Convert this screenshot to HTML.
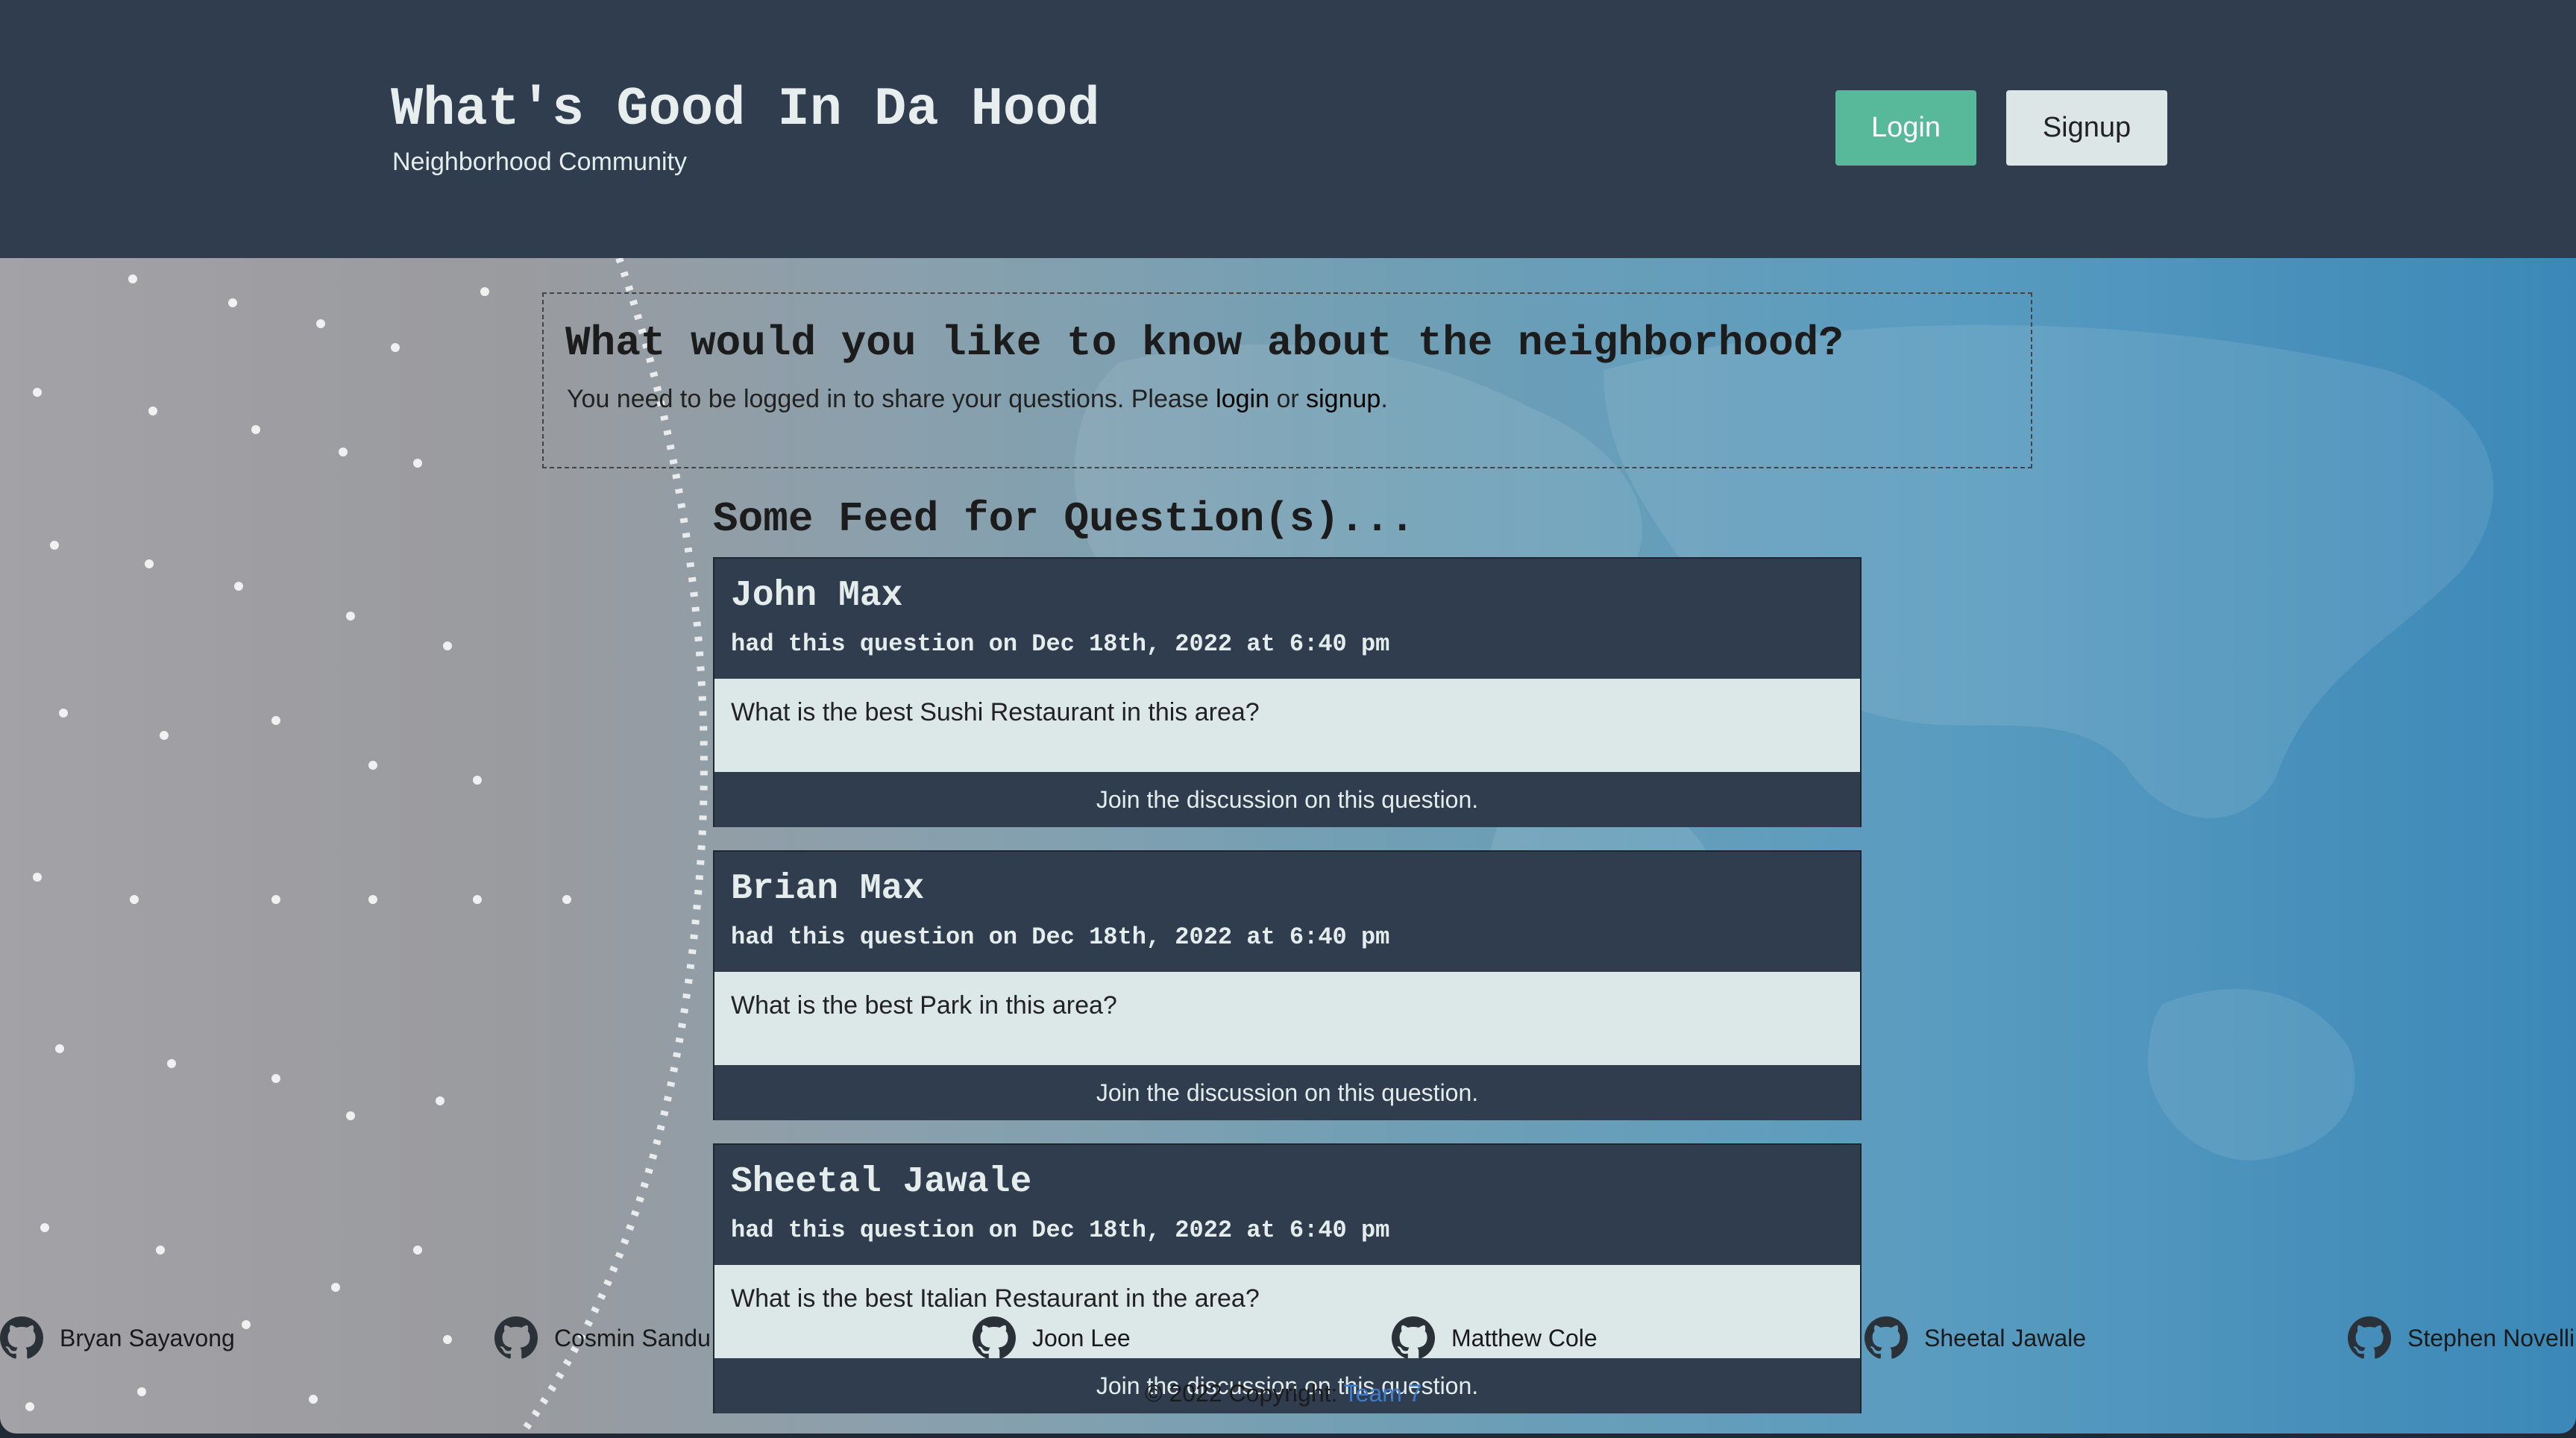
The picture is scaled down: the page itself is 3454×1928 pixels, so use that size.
<!DOCTYPE html>
<html><head><meta charset="utf-8"><style>
*{margin:0;padding:0;box-sizing:border-box}
body{width:3454px;height:1928px;overflow:hidden;background:#1f2a36;font-family:"Liberation Sans",sans-serif;position:relative}
.mono{font-family:"Liberation Mono",monospace;font-weight:bold}
#hdr{position:absolute;left:0;top:0;width:3454px;height:346px;background:#2f3d4f}
#main{position:absolute;left:0;top:346px;width:3454px;height:1576px;border-radius:0 0 22px 22px;overflow:hidden;
background:linear-gradient(90deg,#a3a2a6 0%,#9a9b9f 20%,#8aa0ad 35%,#6f9fb5 55%,#5a9cc0 75%,#3b88b8 100%)}
.a{position:absolute;white-space:nowrap}
.card{position:absolute;left:956px;width:1540px;height:362px;border:2px solid #1e2630}
.card .h{height:161px;background:#2f3d4f;padding:22px 22px}
.card .h .n{font-size:48px;color:#e4ecec;line-height:56px}
.card .h .d{font-size:32px;color:#e4ecec;margin-top:18px}
.card .b{height:125px;background:#dce7e7;padding:26px 22px;font-size:34px;color:#222}
.card .f{height:74px;background:#2f3d4f;color:#e4ecec;font-size:32px;text-align:center;line-height:74px}
.gh{position:absolute;top:1765px;font-size:32px;color:#1a1a1a;display:flex;align-items:center;gap:22px}
.gh svg{width:58px;height:58px}
</style></head><body>
<div id="hdr">
<div class="a mono" style="left:524px;top:106px;font-size:72px;color:#e8eeee">What's Good In Da Hood</div>
<div class="a" style="left:526px;top:198px;font-size:34px;color:#e4ecec">Neighborhood Community</div>
<div class="a" style="left:2461px;top:121px;width:189px;height:101px;background:#58b99a;border-radius:4px;color:#fff;font-size:38px;text-align:center;line-height:101px">Login</div>
<div class="a" style="left:2690px;top:121px;width:216px;height:101px;background:#dde6e6;border-radius:4px;color:#222;font-size:38px;text-align:center;line-height:101px">Signup</div>
</div>
<div id="main">
<svg class="a" style="left:0;top:0" width="3454" height="1576">
<g fill="#cfe3ea" opacity=".13">
<path d="M1500 140 C1700 90 1900 120 2050 200 C2200 260 2250 380 2150 460 C2050 520 1950 600 1900 700 C1850 760 1750 720 1700 640 C1650 560 1550 520 1480 420 C1420 330 1430 200 1500 140Z"/>
<path d="M2150 150 C2500 60 2900 80 3200 150 C3350 200 3380 320 3300 420 C3200 520 3100 560 3050 700 C3000 780 2900 760 2850 680 C2780 600 2650 640 2550 620 C2450 600 2350 560 2300 480 C2250 380 2150 300 2150 150Z"/>
<path d="M2050 700 C2200 680 2300 760 2320 880 C2330 1000 2250 1100 2150 1150 C2080 1180 2020 1100 2000 1000 C1980 900 1980 760 2050 700Z"/>
<path d="M2900 1000 C3000 960 3100 980 3150 1060 C3180 1140 3120 1200 3020 1210 C2940 1210 2880 1140 2880 1080 C2880 1040 2890 1010 2900 1000Z"/>
</g>
<g fill="#fff" opacity=".85">
<circle cx="178" cy="28" r="6"/><circle cx="312" cy="60" r="6"/><circle cx="430" cy="88" r="6"/><circle cx="530" cy="120" r="6"/><circle cx="650" cy="45" r="6"/><circle cx="50" cy="180" r="6"/><circle cx="205" cy="205" r="6"/><circle cx="343" cy="230" r="6"/><circle cx="460" cy="260" r="6"/><circle cx="560" cy="275" r="6"/><circle cx="73" cy="385" r="6"/><circle cx="200" cy="410" r="6"/><circle cx="320" cy="440" r="6"/><circle cx="470" cy="480" r="6"/><circle cx="600" cy="520" r="6"/><circle cx="85" cy="610" r="6"/><circle cx="220" cy="640" r="6"/><circle cx="370" cy="620" r="6"/><circle cx="500" cy="680" r="6"/><circle cx="640" cy="700" r="6"/><circle cx="50" cy="830" r="6"/><circle cx="180" cy="860" r="6"/><circle cx="370" cy="860" r="6"/><circle cx="500" cy="860" r="6"/><circle cx="640" cy="860" r="6"/><circle cx="760" cy="860" r="6"/><circle cx="80" cy="1060" r="6"/><circle cx="230" cy="1080" r="6"/><circle cx="370" cy="1100" r="6"/><circle cx="470" cy="1150" r="6"/><circle cx="590" cy="1130" r="6"/><circle cx="60" cy="1300" r="6"/><circle cx="215" cy="1330" r="6"/><circle cx="330" cy="1430" r="6"/><circle cx="450" cy="1380" r="6"/><circle cx="560" cy="1330" r="6"/><circle cx="40" cy="1540" r="6"/><circle cx="190" cy="1520" r="6"/><circle cx="420" cy="1530" r="6"/><circle cx="600" cy="1450" r="6"/>
</g>
<path d="M830 0 C900 200 960 500 940 800 C920 1100 860 1350 700 1576" stroke="#fff" stroke-width="10" stroke-dasharray="6 14" fill="none" opacity=".8"/>
</svg>
<div class="a" style="left:727px;top:46px;width:1998px;height:236px;border:2px dashed #444"></div>
<div class="a mono" style="left:758px;top:82px;font-size:56px;color:#1c1c1c">What would you like to know about the neighborhood?</div>
<div class="a" style="left:760px;top:170px;font-size:34px;color:#222">You need to be logged in to share your questions. Please <span style="color:#000">login</span> or <span style="color:#000">signup</span>.</div>
<div class="a mono" style="left:956px;top:318px;font-size:56px;color:#1c1c1c">Some Feed for Question(s)...</div>
</div>
<div class="card" style="top:747px"><div class="h"><div class="n mono">John Max</div><div class="d mono">had this question on Dec 18th, 2022 at 6:40 pm</div></div><div class="b">What is the best Sushi Restaurant in this area?</div><div class="f">Join the discussion on this question.</div></div>
<div class="card" style="top:1140px"><div class="h"><div class="n mono">Brian Max</div><div class="d mono">had this question on Dec 18th, 2022 at 6:40 pm</div></div><div class="b">What is the best Park in this area?</div><div class="f">Join the discussion on this question.</div></div>
<div class="card" style="top:1533px"><div class="h"><div class="n mono">Sheetal Jawale</div><div class="d mono">had this question on Dec 18th, 2022 at 6:40 pm</div></div><div class="b">What is the best Italian Restaurant in the area?</div><div class="f">Join the discussion on this question.</div></div>
<svg width="0" height="0" style="position:absolute"><defs><symbol id="g" viewBox="0 0 16 16"><path fill="#2b3138" d="M8 0C3.58 0 0 3.58 0 8c0 3.54 2.29 6.53 5.47 7.59.4.07.55-.17.55-.38 0-.19-.01-.82-.01-1.49-2.01.37-2.53-.49-2.69-.94-.09-.23-.48-.94-.82-1.13-.28-.15-.68-.52-.01-.53.63-.01 1.08.58 1.23.82.72 1.21 1.87.87 2.33.66.07-.52.28-.87.51-1.07-1.78-.2-3.64-.89-3.64-3.95 0-.87.31-1.59.82-2.15-.08-.2-.36-1.02.08-2.12 0 0 .67-.21 2.2.82.64-.18 1.32-.27 2-.27.68 0 1.36.09 2 .27 1.53-1.04 2.2-.82 2.2-.82.44 1.1.16 1.92.08 2.12.51.56.82 1.27.82 2.15 0 3.07-1.87 3.75-3.65 3.95.29.25.54.73.54 1.48 0 1.07-.01 1.93-.01 2.2 0 .21.15.46.55.38A8.013 8.013 0 0016 8c0-4.42-3.58-8-8-8z"/></symbol></defs></svg>
<div class="gh" style="left:0"><svg><use href="#g"/></svg>Bryan Sayavong</div>
<div class="gh" style="left:663px"><svg><use href="#g"/></svg>Cosmin Sandu</div>
<div class="gh" style="left:1304px"><svg><use href="#g"/></svg>Joon Lee</div>
<div class="gh" style="left:1866px"><svg><use href="#g"/></svg>Matthew Cole</div>
<div class="gh" style="left:2500px"><svg><use href="#g"/></svg>Sheetal Jawale</div>
<div class="gh" style="left:3148px"><svg><use href="#g"/></svg>Stephen Novelli</div>
<div class="a" style="left:1535px;top:1850px;font-size:32px;color:#1a1a1a">© 2022 Copyright: <span style="color:#3b7bd0">Team 7</span></div>
</body></html>
